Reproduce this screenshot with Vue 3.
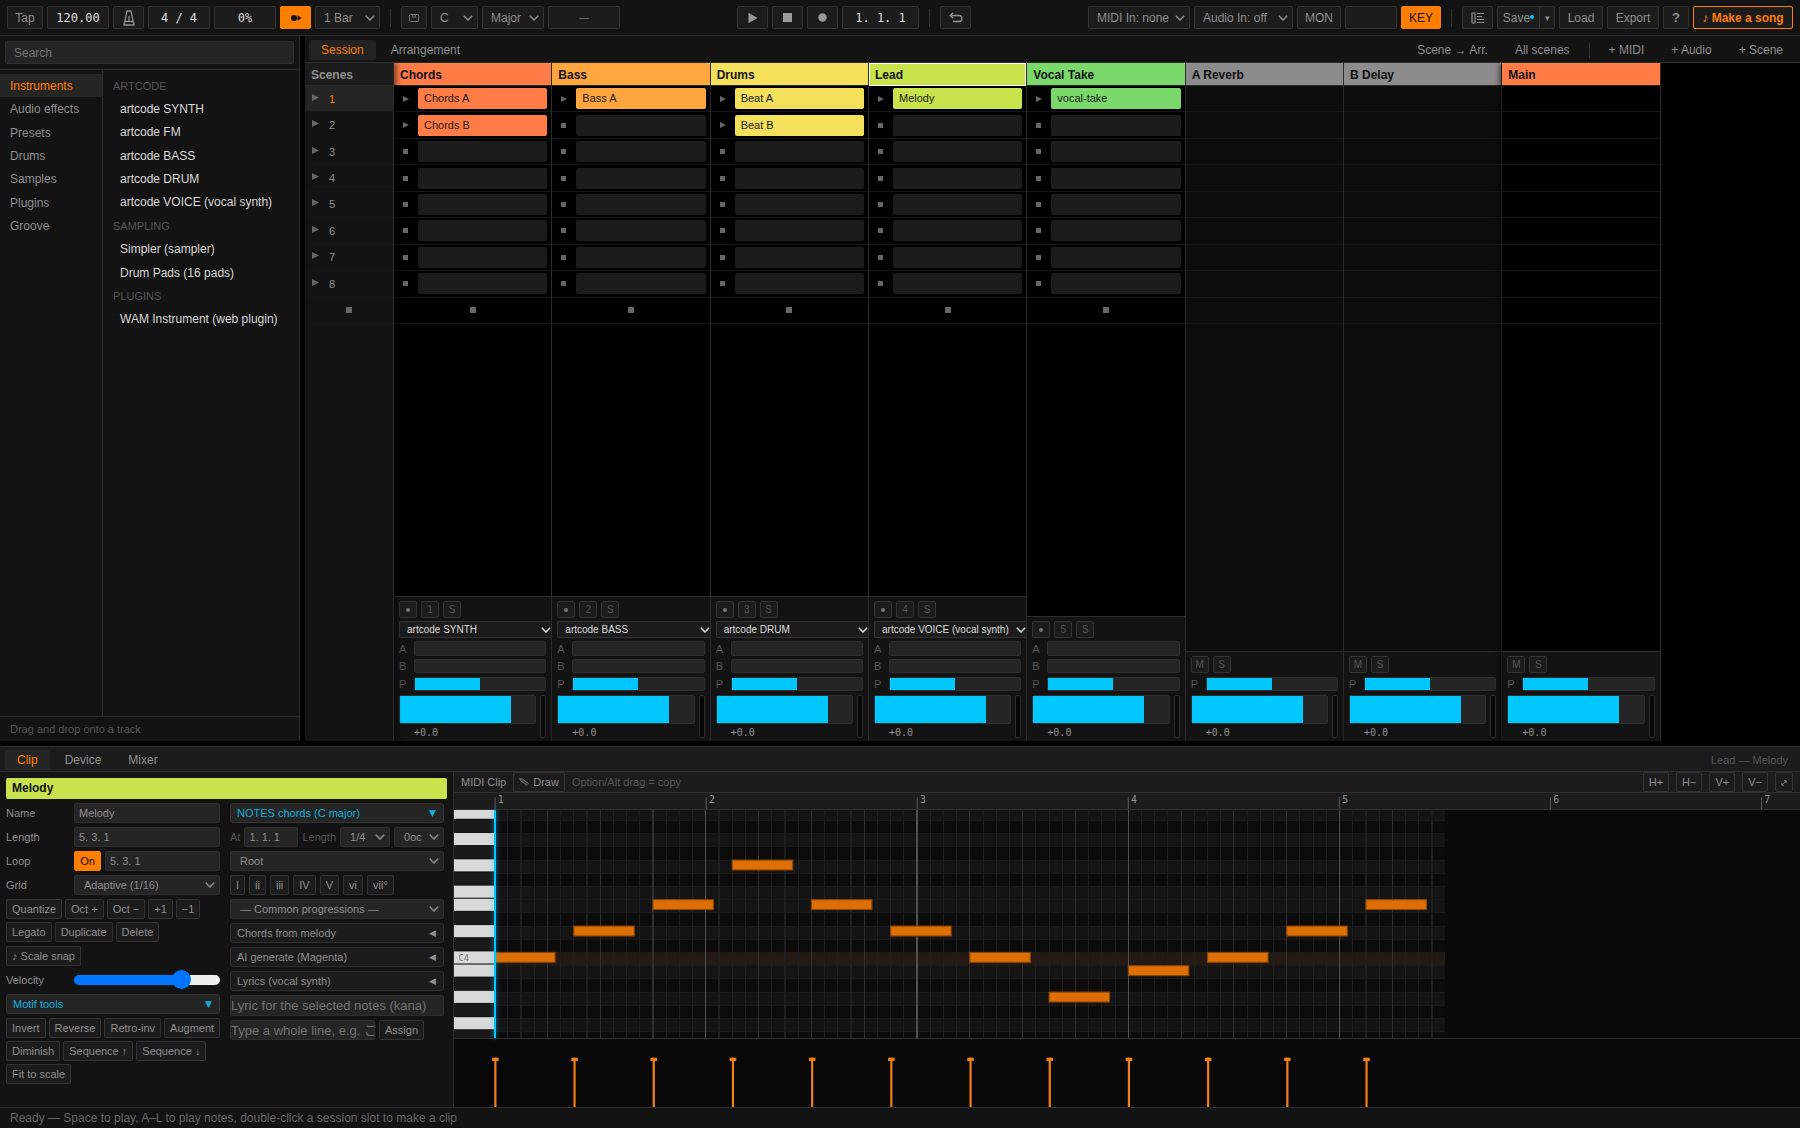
<script setup>
import { ref } from 'vue'

const search = ref('')
const velocity = ref(98)
const clip = ref({ name: 'Melody', length: '5. 3. 1', loop: '5. 3. 1', at: '1. 1. 1' })
const lyric = ref('')
const line = ref('')

const categories = ['Instruments', 'Audio effects', 'Presets', 'Drums', 'Samples', 'Plugins', 'Groove']
const library = [
  { head: 'ARTCODE' },
  { name: 'artcode SYNTH' },
  { name: 'artcode FM' },
  { name: 'artcode BASS' },
  { name: 'artcode DRUM' },
  { name: 'artcode VOICE (vocal synth)' },
  { head: 'SAMPLING' },
  { name: 'Simpler (sampler)' },
  { name: 'Drum Pads (16 pads)' },
  { head: 'PLUGINS' },
  { name: 'WAM Instrument (web plugin)' }
]

const tracks = [
  { kind: 'track', name: 'Chords', color: 'coral', clips: ['Chords A', 'Chords B'], num: 1, device: 'artcode SYNTH' },
  { kind: 'track', name: 'Bass', color: 'amber', clips: ['Bass A'], num: 2, device: 'artcode BASS' },
  { kind: 'track', name: 'Drums', color: 'yellow', clips: ['Beat A', 'Beat B'], num: 3, device: 'artcode DRUM' },
  { kind: 'track', name: 'Lead', color: 'lime', clips: ['Melody'], num: 4, device: 'artcode VOICE (vocal synth)', selected: true },
  { kind: 'track', name: 'Vocal Take', color: 'green', clips: ['vocal-take'], num: 5 },
  { kind: 'return', name: 'A Reverb', color: 'gray' },
  { kind: 'return', name: 'B Delay', color: 'gray' },
  { kind: 'main', name: 'Main', color: 'coral' }
]

const degrees = ['I', 'ii', 'iii', 'IV', 'V', 'vi', 'vii°']

// Piano roll geometry, in drawing units: one sixteenth = 12, one semitone = 12
const CELL = 12
const BAR = CELL * 16
const CLIP_END = BAR * 4 + BAR / 2
const ROWS = ['B4', 'A#4', 'A4', 'G#4', 'G4', 'F#4', 'F4', 'E4', 'D#4', 'D4', 'C#4', 'C4', 'B3', 'A#3', 'A3', 'G#3', 'G3', 'F#3']
const rowTop = (i) => i * CELL - 3
const rows = ROWS.map((name, i) => ({ name, y: rowTop(i), black: name.includes('#'), root: name === 'C4' }))
const gridLines = Array.from({ length: CLIP_END / CELL }, (_, i) => ({
  x: i * CELL,
  cls: i % 16 === 0 ? 'line-bar' : i % 4 === 0 ? 'line-beat' : 'line-sixteenth'
}))
const bars = [1, 2, 3, 4, 5, 6, 7]
const melody = ['C4', 'D4', 'E4', 'G4', 'E4', 'D4', 'C4', 'A3', 'B3', 'C4', 'D4', 'E4']
const notes = melody.map((p, i) => ({ x: i * CELL * 6, y: rowTop(ROWS.indexOf(p)) }))
</script>

<template>
  <div class="app">
    <header class="toolbar">
      <div class="group">
        <button class="btn w36">Tap</button>
        <input class="value w62" value="120.00" aria-label="Tempo" />
        <button class="btn w31" aria-label="Metronome">
          <svg width="12" height="16" viewBox="0 0 12 16"><path d="M4 1h4l3 14H1zM2 11.500h8M6 11.500V6" fill="none" stroke="currentColor" stroke-width="1.300" /></svg>
        </button>
        <input class="value w62" value="4 / 4" aria-label="Time signature" />
        <input class="value w62" value="0%" aria-label="Swing" />
        <button class="btn on w31" aria-label="Follow">
          <svg width="12" height="8" viewBox="0 0 12 8"><circle cx="4" cy="4" r="3" fill="#111" /><path d="M7.500 1.200l4 2.800l-4 2.800z" fill="#111" /></svg>
        </button>
        <span class="sel w65"><select aria-label="Quantization"><option>1 Bar</option></select><svg class="chev" viewBox="0 0 10 6"><path d="M0.800 0.800L5 5L9.200 0.800" /></svg></span>
        <i class="divider"></i>
        <button class="btn w26" aria-label="Keyboard">
          <svg width="10" height="8" viewBox="0 0 10 8"><rect x="0.500" y="0.500" width="9" height="7" rx="1" fill="none" stroke="#777" /><path d="M3.500 1v3M5 1v3M6.500 1v3" stroke="#666" /></svg>
        </button>
        <span class="sel w47"><select aria-label="Key"><option>C</option></select><svg class="chev" viewBox="0 0 10 6"><path d="M0.800 0.800L5 5L9.200 0.800" /></svg></span>
        <span class="sel w62"><select aria-label="Scale"><option>Major</option></select><svg class="chev" viewBox="0 0 10 6"><path d="M0.800 0.800L5 5L9.200 0.800" /></svg></span>
        <output class="display w72">—</output>
      </div>

      <div class="group">
        <button class="btn w31" aria-label="Play"><svg width="10" height="12" viewBox="0 0 10 12"><path d="M0.500 0.800l9 5.200l-9 5.200z" fill="#999" /></svg></button>
        <button class="btn w31" aria-label="Stop"><svg width="9" height="9"><rect width="9" height="9" fill="#999" /></svg></button>
        <button class="btn w31" aria-label="Record"><svg width="9" height="9"><circle cx="4.500" cy="4.500" r="4.200" fill="#999" /></svg></button>
        <input class="value w77" value="1. 1. 1" aria-label="Position" />
        <i class="divider"></i>
        <button class="btn w31" aria-label="Undo">
          <svg width="14" height="11" viewBox="0 0 14 11"><path d="M4 0.800L1.200 3.500L4 6.200M1.500 3.500h8.500a3 3 0 0 1 0 6H4" fill="none" stroke="currentColor" stroke-width="1.300" /></svg>
        </button>
      </div>

      <div class="group">
        <span class="sel w102"><select aria-label="MIDI input"><option>MIDI In: none</option></select><svg class="chev" viewBox="0 0 10 6"><path d="M0.800 0.800L5 5L9.200 0.800" /></svg></span>
        <span class="sel w99"><select aria-label="Audio input"><option>Audio In: off</option></select><svg class="chev" viewBox="0 0 10 6"><path d="M0.800 0.800L5 5L9.200 0.800" /></svg></span>
        <button class="btn w44">MON</button>
        <output class="display w52"></output>
        <button class="btn on w40">KEY</button>
        <i class="divider"></i>
        <button class="btn w31" aria-label="Browser">
          <svg width="13" height="12" viewBox="0 0 13 12"><path d="M1 1h3v10H1zM6 1.500h7M6 4.500h5M6 7.500h7M6 10.500h7" fill="none" stroke="currentColor" stroke-width="1.200" /></svg>
        </button>
        <div class="split">
          <button class="btn w42">Save<b class="dot"></b></button><button class="btn w16 tiny" aria-label="Save options">▾</button>
        </div>
        <button class="btn w44">Load</button>
        <button class="btn w52">Export</button>
        <button class="btn w26 strong">?</button>
        <button class="btn song">♪ Make a song</button>
      </div>
    </header>

    <main class="upper">
      <aside class="browser">
        <div class="search"><input v-model="search" placeholder="Search" aria-label="Search" /></div>
        <div class="lists">
          <nav class="cats">
            <div class="cat-list">
              <a v-for="(c, i) in categories" :key="c" href="#" :class="{ active: i === 0 }">{{ c }}</a>
            </div>
          </nav>
          <div class="library">
            <span v-for="l in library" :key="l.head || l.name" :class="l.head ? 'head' : 'entry'">{{ l.head || l.name }}</span>
          </div>
        </div>
        <div class="hint">Drag and drop onto a track</div>
      </aside>

      <section class="session">
        <div class="tabs">
          <button class="tab active">Session</button>
          <button class="tab">Arrangement</button>
          <span class="grow"></span>
          <button class="tab">Scene → Arr.</button>
          <button class="tab">All scenes</button>
          <i class="divider"></i>
          <button class="tab">+ MIDI</button>
          <button class="tab">+ Audio</button>
          <button class="tab">+ Scene</button>
        </div>
        <div class="columns">
          <div class="col scenes">
            <div class="col-head">Scenes</div>
            <div class="slots">
              <div v-for="n in 8" :key="n" class="scene" :class="{ active: n === 1 }">
                <svg width="7" height="7" viewBox="0 0 7 7"><path d="M0 0l7 3.500l-7 3.500z" fill="#666" /></svg>{{ n }}
              </div>
              <div class="stop-row"><i class="stop big"></i></div>
            </div>
          </div>
          <div v-for="t in tracks" :key="t.name" class="col" :class="t.kind">
            <div class="col-head" :class="[t.color, { selected: t.selected }]">{{ t.name }}</div>
            <div class="slots">
              <template v-if="t.kind === 'track'">
                <div v-for="n in 8" :key="n" class="slot">
                  <span class="launch">
                    <svg v-if="t.clips[n - 1]" width="6" height="6" viewBox="0 0 6 6"><path d="M0 0l6 3l-6 3z" fill="#666" /></svg>
                    <i v-else class="stop"></i>
                  </span>
                  <div class="clip" :class="t.clips[n - 1] ? t.color : 'empty'">{{ t.clips[n - 1] }}</div>
                </div>
                <div class="stop-row"><i class="stop big"></i></div>
              </template>
              <template v-else>
                <div v-for="n in 9" :key="n" class="slot"></div>
              </template>
            </div>
            <div class="grow"></div>
            <div class="strip">
              <div class="mini-row">
                <button v-if="t.num" class="mini" aria-label="Arm"><i class="arm"></i></button>
                <button class="mini">{{ t.num || 'M' }}</button>
                <button class="mini">S</button>
              </div>
              <span v-if="t.device" class="device-sel"><select :aria-label="t.name + ' device'"><option>{{ t.device }}</option></select><svg class="chev" viewBox="0 0 10 6"><path d="M0.800 0.800L5 5L9.200 0.800" /></svg></span>
              <template v-if="t.num">
                <div class="send first"><span>A</span><div class="bar"></div></div>
                <div class="send"><span>B</span><div class="bar"></div></div>
              </template>
              <div class="send pan"><span>P</span><div class="bar"><i class="half"></i></div></div>
              <div class="volume">
                <div class="fader-col">
                  <div class="fader"><i></i></div>
                  <span class="db">+0.0</span>
                </div>
                <div class="meter"></div>
              </div>
            </div>
          </div>
        </div>
      </section>
    </main>

    <section class="lower">
      <div class="tabs lower-tabs">
        <button class="tab active">Clip</button>
        <button class="tab">Device</button>
        <button class="tab">Mixer</button>
        <span class="grow"></span>
        <span class="crumb">Lead — Melody</span>
      </div>
      <div class="detail">
        <div class="inspector">
          <div class="clip-title">Melody</div>
          <div class="forms">
            <div class="form">
              <div class="row"><label for="f-name">Name</label><input id="f-name" v-model="clip.name" class="field" /></div>
              <div class="row"><label for="f-len">Length</label><input id="f-len" v-model="clip.length" class="field" /></div>
              <div class="row"><label for="f-loop">Loop</label><button class="sm on">On</button><input id="f-loop" v-model="clip.loop" class="field" /></div>
              <div class="row"><label for="f-grid">Grid</label><span class="field-sel"><select id="f-grid"><option>Adaptive (1/16)</option></select><svg class="chev" viewBox="0 0 10 6"><path d="M0.800 0.800L5 5L9.200 0.800" /></svg></span></div>
              <div class="wrap">
                <button class="sm">Quantize</button><button class="sm">Oct +</button><button class="sm">Oct −</button><button class="sm">+1</button><button class="sm">−1</button>
                <button class="sm">Legato</button><button class="sm">Duplicate</button><button class="sm">Delete</button>
              </div>
              <div class="row"><button class="sm">♪ Scale snap</button></div>
              <div class="row"><label for="f-vel">Velocity</label><input id="f-vel" v-model="velocity" class="range" type="range" min="0" max="127" /></div>
              <button class="fold open"><span>Motif tools</span><span class="mark">▼</span></button>
              <div class="wrap">
                <button class="sm">Invert</button><button class="sm">Reverse</button><button class="sm">Retro-inv</button><button class="sm">Augment</button>
                <button class="sm">Diminish</button><button class="sm">Sequence ↑</button><button class="sm">Sequence ↓</button>
                <button class="sm">Fit to scale</button>
              </div>
            </div>
            <div class="form">
              <button class="fold open"><span>NOTES chords (C major)</span><span class="mark">▼</span></button>
              <div class="row at">
                <label for="f-at">At</label><input id="f-at" v-model="clip.at" class="field" />
                <label for="f-dur">Length</label>
                <span class="field-sel"><select id="f-dur"><option>1/4</option></select><svg class="chev" viewBox="0 0 10 6"><path d="M0.800 0.800L5 5L9.200 0.800" /></svg></span>
                <span class="field-sel"><select aria-label="Octave"><option>0oc</option></select><svg class="chev" viewBox="0 0 10 6"><path d="M0.800 0.800L5 5L9.200 0.800" /></svg></span>
              </div>
              <span class="field-sel"><select aria-label="Inversion"><option>Root</option></select><svg class="chev" viewBox="0 0 10 6"><path d="M0.800 0.800L5 5L9.200 0.800" /></svg></span>
              <div class="row"><button v-for="d in degrees" :key="d" class="sm">{{ d }}</button></div>
              <span class="field-sel"><select aria-label="Progressions"><option>— Common progressions —</option></select><svg class="chev" viewBox="0 0 10 6"><path d="M0.800 0.800L5 5L9.200 0.800" /></svg></span>
              <button class="fold"><span>Chords from melody</span><span class="mark">◀</span></button>
              <button class="fold"><span>AI generate (Magenta)</span><span class="mark">◀</span></button>
              <button class="fold"><span>Lyrics (vocal synth)</span><span class="mark">◀</span></button>
              <input v-model="lyric" class="field lyric" placeholder="Lyric for the selected notes (kana)" aria-label="Lyric" />
              <div class="row last"><input v-model="line" class="field lyric" placeholder="Type a whole line, e.g. こんにちは" aria-label="Lyric line" /><button class="sm">Assign</button></div>
            </div>
          </div>
        </div>

        <div class="editor">
          <div class="editor-bar">
            <span class="name">MIDI Clip</span>
            <button class="sm"><svg class="pencil" width="10" height="8" viewBox="0 0 10 8"><path d="M0.500 0.500l3 0.500l6 4.500l-1.500 2l-6-4.500z" fill="#444" stroke="#777" stroke-width="0.800" /></svg>Draw</button>
            <span class="tip">Option/Alt drag = copy</span>
            <span class="grow"></span>
            <button class="sm">H+</button><button class="sm">H−</button><button class="sm">V+</button><button class="sm">V−</button>
            <button class="sm" aria-label="Fit"><svg width="6" height="6" viewBox="0 0 6 6"><path d="M1 5L5 1M3 0.800h2.200V3M0.800 3v2.200H3" fill="none" stroke="#888" stroke-width="0.800" /></svg></button>
          </div>
          <div class="ruler">
            <svg viewBox="0 0 1187 14">
              <g v-for="b in bars" :key="b">
                <rect :x="(b - 1) * BAR" y="4" width="1" height="11" fill="#555" />
                <text :x="(b - 1) * BAR + 3" y="9">{{ b }}</text>
              </g>
            </svg>
          </div>
          <div class="roll">
            <svg class="keys" viewBox="0 0 37 208" preserveAspectRatio="xMinYMin slice">
              <rect width="37" height="220" fill="#111" />
              <g v-for="r in rows" :key="r.name">
                <rect :y="r.y" width="38" height="11" :fill="r.black ? '#191919' : '#d9d9d9'" />
                <text v-if="r.root" x="4" :y="r.y + 9">C4</text>
              </g>
            </svg>
            <svg class="notes" viewBox="0 0 1187 208" preserveAspectRatio="xMinYMin slice">
              <g shape-rendering="crispEdges">
                <g v-for="r in rows" :key="r.name">
                  <rect :y="r.y" :width="CLIP_END" height="12" :fill="r.root ? '#241a13' : r.black ? '#0c0c0c' : '#141414'" />
                  <rect :y="r.y" :width="CLIP_END" height="1" fill="#1a1a1a" />
                </g>
                <rect v-for="g in gridLines" :key="g.x" :x="g.x" y="0" width="1" height="220" :class="g.cls" />
              </g>
              <rect v-for="n in notes" :key="n.x" :x="n.x + 0.500" :y="n.y + 0.500" width="55" height="9" fill="#de6f04" stroke="#8a4503" stroke-width="1" />
            </svg>
            <i class="playhead"></i>
          </div>
          <div class="lane">
            <svg viewBox="0 0 1189 60">
              <g v-for="n in notes" :key="n.x" fill="#f07f15">
                <rect :x="n.x + 2" y="17" width="2" height="46" />
                <rect :x="n.x" y="17" width="6" height="3" />
              </g>
            </svg>
          </div>
        </div>
      </div>
    </section>

    <footer class="status">Ready — Space to play, A–L to play notes, double-click a session slot to make a clip</footer>
  </div>
</template>

<style>
body { margin: 0; background: #000; }
</style>

<style scoped>
* { box-sizing: border-box; }
.app {
  display: flex;
  flex-direction: column;
  height: 100vh;
  background: #000;
  color: #8f8f8f;
  font: 12px "Liberation Sans", "Noto Sans CJK JP", sans-serif;
  overflow: hidden;
}
button, input, select {
  font: inherit;
  color: inherit;
  margin: 0;
  padding: 0;
  border: 0;
  background: none;
  border-radius: 0;
  outline: none;
  min-width: 0;
  white-space: nowrap;
}
select { appearance: none; width: 100%; height: 100%; }
.grow { flex: 1; }
.chev {
  position: absolute;
  right: 6px;
  top: 50%;
  width: 10px;
  height: 6px;
  margin-top: -3px;
  fill: none;
  stroke: currentColor;
  stroke-width: 1.5;
  pointer-events: none;
}
.divider { width: 1px; height: 18px; background: #333; margin: 0 6px; }

/* Toolbar */
.toolbar {
  display: flex;
  justify-content: space-between;
  align-items: center;
  height: 36px;
  flex: none;
  padding: 0 7px;
  background: #131313;
  border-bottom: 1px solid #2e2e2e;
}
.group { display: flex; align-items: center; gap: 4px; }
.btn, .value, .sel, .display {
  display: flex;
  align-items: center;
  justify-content: center;
  height: 23px;
  border: 1px solid #333;
  border-radius: 2px;
  background: #1c1c1c;
  flex: none;
}
.value {
  font-family: "DejaVu Sans Mono", monospace;
  text-align: center;
  color: #ddd;
}
.sel { position: relative; }
.sel select { padding-left: 8px; }
.sel .chev { right: 4px; }
.btn.on { background: #ff7e00; border-color: #ff7e00; color: #111; }
.strong { font-weight: bold; font-size: 13px; }
.tiny { font-size: 9px; }
.song { width: 100px; border-color: #ff7e00; color: #ff7e00; font-weight: bold; }
.dot { width: 4px; height: 4px; margin-bottom: 1px; border-radius: 2px; background: #00c8ff; }
.split { display: flex; }
.split .btn:first-child { border-right: 0; border-radius: 2px 0 0 2px; }
.split .btn:last-child { border-radius: 0 2px 2px 0; }
.w16 { width: 16px; }
.w26 { width: 26px; }
.w31 { width: 31px; }
.w36 { width: 36px; }
.w40 { width: 40px; }
.w42 { width: 42px; }
.w44 { width: 44px; }
.w47 { width: 47px; }
.w52 { width: 52px; }
.w62 { width: 62px; }
.w65 { width: 65px; }
.w72 { width: 72px; color: #777; font-size: 10px; }
.w77 { width: 77px; }
.w99 { width: 99px; }
.w102 { width: 102px; }

/* Browser */
.upper { display: flex; flex: 1; min-height: 0; gap: 5px; }
.browser {
  display: flex;
  flex-direction: column;
  width: 300px;
  flex: none;
  background: #131313;
  border-right: 1px solid #2e2e2e;
}
.search { padding: 5px; height: 34px; border-bottom: 1px solid #2e2e2e; }
.search input {
  width: 100%;
  height: 23px;
  padding: 0 8px;
  border: 1px solid #2e2e2e;
  border-radius: 2px;
  background: #252525;
}
input::placeholder { color: #737373; opacity: 1; }
.lists { display: flex; flex: 1; }
.cats { width: 103px; flex: none; padding-top: 4px; border-right: 1px solid #2e2e2e; }
.cat-list { display: grid; grid-template-rows: repeat(7, 1fr); height: 164px; }
.cats a {
  display: flex;
  align-items: center;
  padding-left: 10px;
  color: #8f8f8f;
  text-decoration: none;
}
.cats a.active { background: #252525; color: #ff7e00; }
.library { display: grid; grid-template-rows: repeat(11, 1fr); height: 257px; padding-left: 10px; margin-top: 4px; }
.library span { display: flex; align-items: center; white-space: nowrap; }
.head { color: #555; font-size: 11px; }
.entry { color: #d8d8d8; padding-left: 7px; }
.hint { height: 25px; line-height: 24px; padding-left: 10px; border-top: 1px solid #2e2e2e; color: #555; font-size: 11px; }

/* Session */
.session { flex: 1; display: flex; flex-direction: column; min-width: 0; }
.tabs {
  display: flex;
  align-items: center;
  height: 27px;
  flex: none;
  gap: 3px;
  padding: 1px 5px 0 4px;
  background: #131313;
  border-bottom: 1px solid #2e2e2e;
}
.tab { height: 20px; padding: 0 12px; border-radius: 2px; }
.tab.active { background: #222; color: #ff7e00; }
.tabs .divider { height: 16px; margin: 0 4px; }
.columns { flex: 1; display: grid; grid-template-columns: 89px repeat(8, 25fr) 22fr; min-height: 0; overflow: hidden; }
.col { display: flex; flex-direction: column; min-width: 0; border-right: 1px solid #2b2b2b; }
.col.scenes { background: #131313; position: relative; z-index: 1; box-shadow: 2px 0 6px rgba(0, 0, 0, 0.6); }
.col.return { background: #0d0d0d; }
.col.main { background: #000; position: relative; z-index: 1; box-shadow: -2px 0 6px rgba(0, 0, 0, 0.6); }
.col-head {
  height: 23px;
  flex: none;
  padding-left: 6px;
  line-height: 24px;
  font-weight: bold;
  color: #111;
  border-bottom: 1px solid #2b2b2b;
}
.scenes .col-head { background: #1c1c1c; color: #8f8f8f; }
.coral { background: #ff7c47; }
.amber { background: #ffa63f; }
.yellow { background: #f4e05b; }
.lime { background: #c8e34b; }
.green { background: #7bd96c; }
.gray { background: #8c8c8c; }
.selected { outline: 1px solid #fff; outline-offset: -1px; }
.slots { display: grid; grid-template-rows: repeat(9, 1fr); height: 238px; flex: none; }
.slot, .scene, .stop-row { display: flex; align-items: center; border-bottom: 1px solid #161616; }
.scene { padding-left: 7px; gap: 10px; font-size: 11px; }
.scene svg { margin-bottom: 3px; }
.scene.active { background: #252525; color: #ff7e00; }
.stop-row { justify-content: center; }
.launch { width: 24px; padding-left: 9px; flex: none; display: flex; }
.stop { width: 5px; height: 5px; background: #666; }
.stop.big { width: 6px; height: 6px; }
.clip {
  flex: 1;
  height: 21px;
  margin-right: 4px;
  padding-left: 6px;
  line-height: 21px;
  border-radius: 2px;
  color: #1a1a1a;
  font-size: 11px;
}
.clip.empty { background: #1c1c1c; }

.strip { padding: 4px 5px 2px; background: #131313; border-top: 1px solid #2e2e2e; color: #555; font-size: 11px; }
.mini-row { display: flex; gap: 4px; }
.mini {
  display: flex;
  align-items: center;
  justify-content: center;
  width: 18px;
  height: 17px;
  border: 1px solid #333;
  border-radius: 2px;
  background: #1c1c1c;
  font-size: 10px;
}
.arm { width: 4px; height: 4px; border-radius: 2px; background: #777; }
.device-sel {
  display: block;
  position: relative;
  height: 17px;
  margin: 3px -5px 0 0;
  border: 1px solid #333;
  border-right: 0;
  border-radius: 2px 0 0 2px;
  background: #1c1c1c;
  color: #ddd;
  font-size: 10px;
}
.device-sel select { padding-left: 7px; }
.device-sel .chev { right: 0; }
.send { display: flex; align-items: center; height: 14px; margin-top: 3px; }
.send.first { height: 15px; }
.send.pan { margin-top: 4px; }
.send span { width: 15px; flex: none; }
.bar, .fader, .meter { border: 1px solid #2e2e2e; border-radius: 2px; background: #252525; }
.bar { flex: 1; height: 100%; }
.bar i, .fader i { display: block; height: 100%; background: #00c8ff; }
.bar .half { width: 50%; }
.volume { display: flex; gap: 4px; height: 44px; margin-top: 4px; }
.fader-col { flex: 1; }
.fader { height: 29px; }
.fader i { width: 82%; }
.meter { width: 6px; height: 43px; background: #080808; }
.db { display: block; padding-left: 15px; font: 10px/17px "DejaVu Sans Mono", monospace; color: #8f8f8f; }

/* Detail view */
.lower { height: 361px; flex: none; margin-top: 5px; display: flex; flex-direction: column; border-top: 1px solid #2e2e2e; background: #131313; }
.lower-tabs { height: 25px; padding-left: 5px; background: #1c1c1c; }
.lower-tabs .tab.active { background: #252525; }
.crumb { padding-right: 7px; color: #555; font-size: 11px; }
.detail { display: flex; flex: 1; min-height: 0; }
.inspector { width: 454px; flex: none; padding: 6px 6px 0; border-right: 1px solid #2e2e2e; font-size: 11px; }
.clip-title { height: 21px; line-height: 21px; padding-left: 6px; border-radius: 2px; background: #c8e34b; color: #111; font-size: 12px; font-weight: bold; }
.forms { display: flex; gap: 10px; margin-top: 4px; }
.form { width: 214px; display: flex; flex-direction: column; gap: 4px; }
.row { display: flex; align-items: center; gap: 4px; height: 20px; }
.row label { width: 64px; flex: none; }
.field {
  flex: 1;
  height: 20px;
  padding-left: 4px;
  border: 1px solid #2e2e2e;
  border-radius: 2px;
  background: #252525;
}
.field-sel { position: relative; display: block; height: 20px; flex: 1; border: 1px solid #2e2e2e; border-radius: 2px; background: #252525; }
.form > .field-sel { flex: none; }
.field-sel select { padding-left: 9px; }
.field-sel .chev { right: 4px; }
.at label { width: auto; color: #555; }
.sm {
  height: 20px;
  padding: 0 5px;
  border: 1px solid #333;
  border-radius: 2px;
  background: #1c1c1c;
}
.sm.on { background: #ff7e00; border-color: #ff7e00; color: #111; width: 27px; }
.wrap { display: flex; flex-wrap: wrap; gap: 3px; margin-right: -6px; }
.fold {
  display: flex;
  justify-content: space-between;
  align-items: center;
  height: 20px;
  padding: 0 7px 0 6px;
  border: 1px solid #2e2e2e;
  border-radius: 3px;
  background: #1c1c1c;
}
.fold.open { background: #252525; border-color: #333; color: #10aede; }
.mark { font: 9px "DejaVu Sans", sans-serif; }
.range { appearance: none; flex: 1; height: 19px; }
.range::-webkit-slider-runnable-track {
  height: 10px;
  border-radius: 5px;
  background: linear-gradient(to right, #0075ff 75%, #efefef 75%);
}
.range::-webkit-slider-thumb { appearance: none; width: 19px; height: 19px; margin-top: -5px; border-radius: 50%; background: #0075ff; }
.lyric { height: 21px; padding-left: 0; flex: none; font-size: 13px; }
.row.last .field { width: 145px; height: 20px; }

.editor { flex: 1; display: flex; flex-direction: column; min-width: 0; font-size: 11px; }
.editor-bar { display: flex; align-items: center; height: 21px; flex: none; gap: 7px; padding: 0 7px; background: #1c1c1c; border-bottom: 1px solid #2e2e2e; }
.pencil { margin-right: 4px; }
.tip { color: #555; }
.ruler { height: 17px; flex: none; padding-left: 40px; background: #1c1c1c; border-bottom: 1px solid #2e2e2e; overflow: hidden; }
.roll svg { display: block; height: 100%; }
.ruler svg, .lane svg { display: block; width: 100%; overflow: visible; }
.ruler text, .keys text { font: 9px "DejaVu Sans Mono", monospace; fill: #8f8f8f; }
.keys text { font-size: 8px; fill: #777; }
.roll { position: relative; display: flex; height: 229px; flex: none; background: #0a0a0a; border-bottom: 1px solid #2e2e2e; }
.roll .keys { width: 40px; flex: none; }
.roll .notes { flex: 1; min-width: 0; }
.line-sixteenth { fill: #1f1f1f; }
.line-beat { fill: #303030; }
.line-bar { fill: #505050; }
.playhead { position: absolute; left: 40px; top: 0; bottom: 0; width: 2px; background: #00c8ff; box-shadow: 0 0 5px rgba(0, 200, 255, 0.7); }
.lane { flex: 1; min-height: 0; padding-left: 38px; background: #080808; overflow: hidden; }

.status { height: 21px; flex: none; line-height: 20px; padding-left: 10px; background: #131313; border-top: 1px solid #2e2e2e; color: #666; }
</style>
